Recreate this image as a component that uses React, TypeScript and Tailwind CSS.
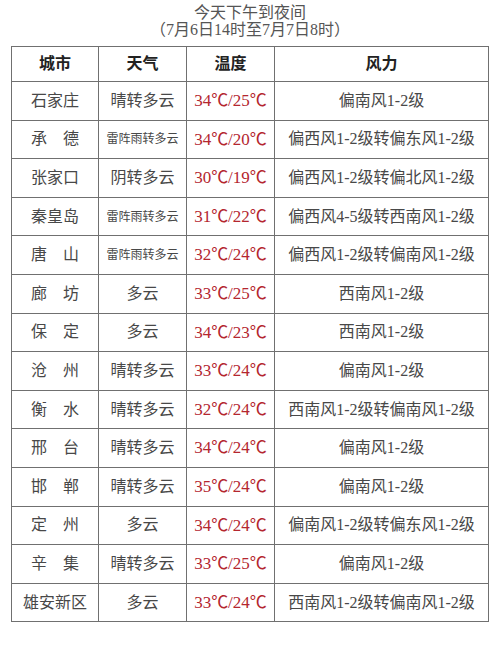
const rows: [string, string, string, string][] = [
  ["石家庄", "晴转多云", "34℃/25℃", "偏南风1-2级"],
  ["承　德", "雷阵雨转多云", "34℃/20℃", "偏西风1-2级转偏东风1-2级"],
  ["张家口", "阴转多云", "30℃/19℃", "偏西风1-2级转偏北风1-2级"],
  ["秦皇岛", "雷阵雨转多云", "31℃/22℃", "偏西风4-5级转西南风1-2级"],
  ["唐　山", "雷阵雨转多云", "32℃/24℃", "偏西风1-2级转偏南风1-2级"],
  ["廊　坊", "多云", "33℃/25℃", "西南风1-2级"],
  ["保　定", "多云", "34℃/23℃", "西南风1-2级"],
  ["沧　州", "晴转多云", "33℃/24℃", "偏南风1-2级"],
  ["衡　水", "晴转多云", "32℃/24℃", "西南风1-2级转偏南风1-2级"],
  ["邢　台", "晴转多云", "34℃/24℃", "偏南风1-2级"],
  ["邯　郸", "晴转多云", "35℃/24℃", "偏南风1-2级"],
  ["定　州", "多云", "34℃/24℃", "偏南风1-2级转偏东风1-2级"],
  ["辛　集", "晴转多云", "33℃/25℃", "偏南风1-2级"],
  ["雄安新区", "多云", "33℃/24℃", "西南风1-2级转偏南风1-2级"],
];

export default function App() {
  return (
    <div className="w-[500px] h-[646px] bg-white font-['Liberation_Serif','Noto_Sans_CJK_SC',serif] text-[#484848]">
      {/* 标题 */}
      <div className="pt-[4px] text-center text-[16px] leading-[17px] text-[#555]">
        <div>今天下午到夜间</div>
        <div>（7月6日14时至7月7日8时）</div>
      </div>

      <table className="mt-[8px] mx-auto w-[478px] table-fixed border-collapse border border-[#707070]">
        <colgroup>
          <col className="w-[87px]" />
          <col className="w-[88px]" />
          <col className="w-[88px]" />
          <col />
        </colgroup>
        <thead>
          <tr className="h-[35px]">
            {["城市", "天气", "温度", "风力"].map((h) => (
              <th
                key={h}
                className="border border-[#707070] text-center text-[16px] font-semibold text-[#222]"
              >
                {h}
              </th>
            ))}
          </tr>
        </thead>
        <tbody>
          {rows.map(([city, weather, temp, wind]) => (
            <tr key={city} className="h-[38.6px]">
              <td className="border border-[#707070] text-center text-[16px] whitespace-nowrap">
                {city}
              </td>
              <td
                className={
                  weather.length > 4
                    ? "border border-[#707070] text-center text-[12px] whitespace-nowrap"
                    : "border border-[#707070] text-center text-[16px] whitespace-nowrap"
                }
              >
                {weather}
              </td>
              <td className="border border-[#707070] text-center text-[17px] text-[#b4262f] whitespace-nowrap">
                {temp}
              </td>
              <td className="border border-[#707070] text-center text-[16px] whitespace-nowrap">
                {wind}
              </td>
            </tr>
          ))}
        </tbody>
      </table>
    </div>
  );
}
